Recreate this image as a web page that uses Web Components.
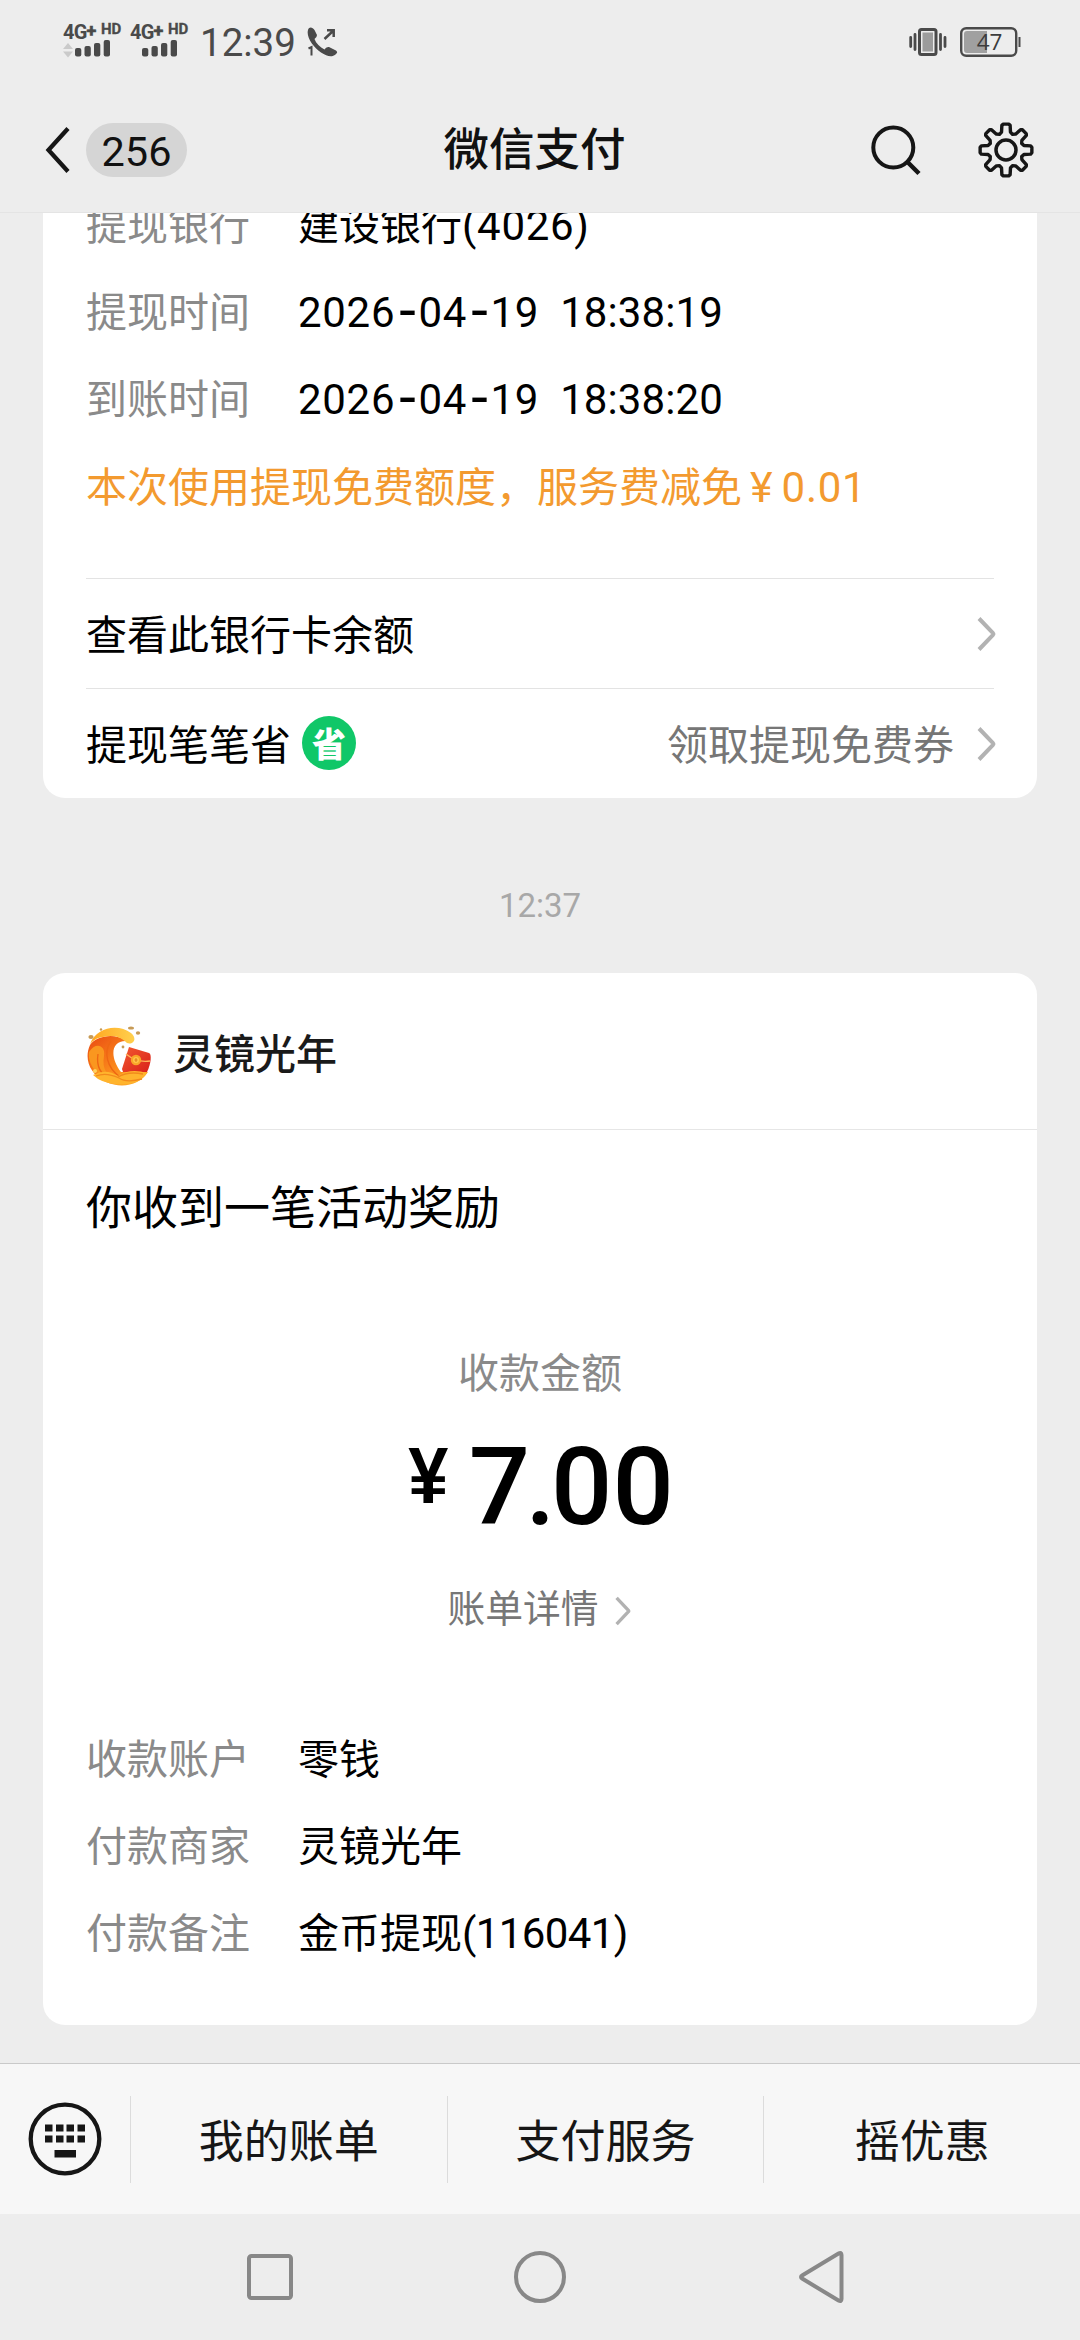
<!DOCTYPE html>
<html lang="zh-CN">
<head>
<meta charset="utf-8">
<title>微信支付</title>
<style>
html,body{margin:0;padding:0}
body{width:1080px;height:2340px;overflow:hidden;background:#ededed;color:#000;font-family:Roboto,"Noto Sans CJK SC",sans-serif}
</style>
</head>
<body>
<pay-app></pay-app>
<script>
const define = (name, html) => customElements.define(name, class extends HTMLElement {
  constructor() {
    super();
    const t = document.createElement('template');
    t.innerHTML = html;
    this.attachShadow({ mode: 'open' }).appendChild(t.content.cloneNode(true));
  }
});

define('arrow-icon', `
<style>:host{display:block;width:20px;height:38px}svg{display:block;width:100%;height:100%}</style>
<svg viewBox="0 0 20 38"><path d="M3 3.500L17 18.200Q17.700 19 17 19.800L3 34.500" fill="none" stroke="#b2b2b2" stroke-width="4"/></svg>`);

define('signal-mark', `
<style>
:host{display:flex;flex-direction:column;width:59px;height:36px;color:#4a4a4a}
.t{display:flex;height:16px;font-weight:700;line-height:17px;align-items:flex-start;white-space:nowrap}
.g{font-size:20px;width:38px;letter-spacing:-.8px}
.g span{font-size:18px;line-height:0;vertical-align:2.500px;-webkit-text-stroke:.6px #4a4a4a}
.h{font-size:15px;line-height:11px;letter-spacing:-.2px;-webkit-text-stroke:.3px #4a4a4a}
svg{display:block;width:50px;height:19px}
:host(:not([data])) .d{display:none}
</style>
<div class="t"><span class="g">4G<span>+</span></span><span class="h">HD</span></div>
<svg viewBox="0 0 50 19"><g class="d" fill="#cacaca"><path d="M0 9L5 3L10 9zM0 11.500L5 17.500L10 11.500z"/></g>
<g fill="#4a4a4a"><rect x="12" y="8" width="6.300" height="8.500" rx="2"/><rect x="21.500" y="6" width="6.300" height="10.500" rx="2"/><rect x="31" y="3" width="6.300" height="13.500" rx="2"/><rect x="40.700" y="0" width="6.300" height="16.500" rx="2"/></g></svg>`);

define('status-bar', `
<style>
:host{display:flex;height:84px;box-sizing:border-box;padding:0 59px 0 63px;align-items:center;color:#4a4a4a}
signal-mark{margin-right:8px}
.time{font-size:38.500px;line-height:40px;margin:1px 0 0 3px;width:107px;white-space:nowrap}
svg{display:block;flex:none}
.sp{flex:1}
.vib{margin-right:13px}
</style>
<signal-mark data></signal-mark><signal-mark></signal-mark>
<span class="time">12:39</span>
<svg width="32" height="32" viewBox="0 0 32 32"><path d="M1 4C1.500 .5 5.500 .5 7.500 4L10 9Q10 11.500 7.500 13C9 17.500 13 21 17.500 23.500Q19 20.500 22 21L29 24.500Q31.500 26.500 28.500 28.500C25 31.500 20 30.500 14 26.500C6 21-1 11 1 4Z" fill="#4a4a4a"/><path d="M17.500 13L26 5M20 4.300H26.700V11" fill="none" stroke="#4a4a4a" stroke-width="2.500"/><path d="M1.500 22.500L4.500 21V29.500" fill="none" stroke="#4a4a4a" stroke-width="2"/></svg>
<span class="sp"></span>
<svg class="vib" width="38" height="30" viewBox="0 0 38 30"><rect x="10.500" y="2.500" width="16.500" height="25" rx="2" fill="#ededed" stroke="#4a4a4a" stroke-width="3"/><rect x="13.500" y="5.500" width="10.500" height="19" fill="#9c9c9c"/><path d="M1.700 10.500V19.500M6 7.500V22.500M31.500 7.500V22.500M36 10.500V19.500" stroke="#4a4a4a" stroke-width="2.800" stroke-linecap="round"/></svg>
<svg width="61" height="30" viewBox="0 0 61 30"><rect x="1.200" y="1.200" width="55" height="27.600" rx="5" fill="none" stroke="#4a4a4a" stroke-width="2.400"/><path d="M4 7Q4 4 7 4H27V26H7Q4 26 4 23Z" fill="#a0a0a0"/><path d="M59.500 10V20" stroke="#4a4a4a" stroke-width="2"/><text x="29.500" y="23" text-anchor="middle" font-family="Open Sans" font-size="22.500" fill="#3c3c3c">47</text></svg>`);

define('nav-header', `
<style>
:host{display:grid;grid-template-columns:1fr auto 1fr;align-items:center;height:129px;box-sizing:border-box;padding:3px 45px 0 44px;border-bottom:1px solid #e4e4e4;color:#111}
div{display:flex;align-items:center;height:60px}
.b{font-size:41.500px;font-weight:450;background:#d5d5d5;border-radius:27px;width:101px;height:54px;line-height:57px;text-align:center;margin-left:15px}
h1{margin:0;font-size:45.500px;font-weight:500;line-height:60px;padding:3px 10px 0 0}
.r{justify-content:flex-end;gap:56px}
svg{display:block}
</style>
<div><svg width="27" height="50" viewBox="0 0 27 50"><path d="M24 3.500L4.500 25L24 46.500" fill="none" stroke="#161616" stroke-width="4.300"/></svg><span class="b">256</span></div>
<h1><slot></slot></h1>
<div class="r">
<svg width="52" height="56" viewBox="0 0 52 56"><circle cx="24.300" cy="25.500" r="20" fill="none" stroke="#161616" stroke-width="4"/><path d="M38.500 40L50 51.500" stroke="#161616" stroke-width="4.500"/></svg>
<svg id="gear" width="58" height="58" viewBox="-29 -29 58 58"><circle r="10" fill="none" stroke="#161616" stroke-width="3.500"/></svg>
</div>`);

define('info-row', `
<style>
:host{display:flex;align-items:center;height:87px;font-size:41px;line-height:60px;white-space:nowrap}
.l{color:#8a8a8a;width:212px;flex:none}
</style>
<span class="l"><slot name="label"></slot></span><span><slot></slot></span>`);

define('entry-row', `
<style>
:host{display:flex;align-items:center;height:110px;box-sizing:border-box;border-top:1px solid #e3e3e3;font-size:41px;line-height:60px;padding:4px 0 0}
.x{margin-left:auto;color:#767676;margin-right:22px}
arrow-icon{margin-top:-4px;margin-right:-2px}
</style>
<slot></slot><span class="x"><slot name="extra"></slot></span><arrow-icon></arrow-icon>`);

define('save-badge', `
<style>:host{display:flex;align-items:center;justify-content:center;width:54px;height:54px;border-radius:50%;background:#10c768;color:#fff;margin:-5px 0 0 11px;font:900 34px/54px "Noto Sans CJK SC",sans-serif}</style><slot></slot>`);

define('time-stamp', `
<style>:host{display:block;flex:none;height:175px;box-sizing:border-box;padding-top:79px;text-align:center;color:#a8a8a8;font-size:33px;line-height:57px}</style><slot></slot>`);

define('pay-card', `
<style>:host{display:block;box-sizing:border-box;margin:0 43px;padding:0 43px;background:#fff;border-radius:22px;flex:none}</style><slot></slot>`);

define('wave-logo', `
<style>:host{display:block;width:66px;height:62px}svg{display:block}</style>
<svg width="66" height="62" viewBox="0 0 66 62">
<defs><linearGradient id="a" x1="0" y1="0" x2="1" y2="1"><stop offset="0" stop-color="#e94a12"/><stop offset=".55" stop-color="#fb8a1c"/><stop offset="1" stop-color="#ffb62d"/></linearGradient>
<linearGradient id="b" x1="0" y1="0" x2="1" y2="1"><stop offset="0" stop-color="#f25a30"/><stop offset="1" stop-color="#d9201a"/></linearGradient>
<linearGradient id="c" x1="0" y1="0" x2="1" y2="0"><stop offset="0" stop-color="#ffa51f"/><stop offset="1" stop-color="#ffd04d"/></linearGradient></defs>
<path d="M41 16C24 15 24 33 35 47L62 47C54 60 36 64 20 57C3 49-2 33 4 20C10 11 28 7 41 16Z" fill="url(#a)"/>
<path d="M4 19C11 1 33-1 45 8C52 14 47 20 41 18C33 10 25 10 17 12C10 13 7 16 4 19Z" fill="url(#c)"/>
<path d="M3 27C10 16 20 21 18 31C16 44 20 50 32 55C17 56 1 43 3 27Z" fill="#fa971f"/>
<path d="M12 29C10 42 15 50 25 54M25 16C17 27 21 43 34 52" fill="none" stroke="#ee6613" stroke-width="1.300"/>
<path d="M43 22L63 28C66 29 65 39 61 47L37 47L36 44Z" fill="url(#b)"/>
<path d="M40 29Q51 38 64 36" fill="none" stroke="#ffb35a" stroke-width="1.400"/>
<circle cx="50" cy="35" r="5.200" fill="#f9a629"/><circle cx="50" cy="35" r="3" fill="#ffc649"/><path d="M50 33V37M48.500 35H51.500" stroke="#dd7a18"/>
<path d="M7 50Q20 43 32 51Q44 43 61 48C54 59 40 60 31 59.500Q15 58 7 50Z" fill="#ffb42d"/>
<path d="M10 51Q20 47 33 53Q40 58 56 54M32 52Q42 46 57 49" fill="none" stroke="#f28a1c" stroke-width="1.300"/>
<g fill="#c79a55"><ellipse cx="5" cy="12" rx="2.600" ry="2"/><circle cx="15" cy="4.500" r="1.200"/><ellipse cx="45" cy="3" rx="3" ry="1.600"/><ellipse cx="52" cy="8" rx="2.200" ry="1.700"/><circle cx="37" cy="22" r="1.400"/></g>
<circle cx="9" cy="46" r="2" fill="#ffd25c"/>
</svg>`);

define('merchant-head', `
<style>:host{display:flex;align-items:center;height:157px;box-sizing:border-box;border-bottom:1px solid #e6e6e6;margin:0 -43px;padding:0 43px;font-size:41px;font-weight:500;color:#1a1a1a}
wave-logo{margin:9px 21px 0 0}</style><wave-logo></wave-logo><slot></slot>`);

define('amount-block', `
<style>
:host{display:flex;flex-direction:column;align-items:center}
.c{color:#8a8a8a;font-size:41px;line-height:60px;margin-top:60px}
.m{display:flex;height:166px;align-items:center;font-weight:500;font-size:108px;line-height:130px}
.y{font-size:80px;line-height:80px;margin:-22px 18px 0 0;font-family:"Liberation Sans";font-weight:700;transform:scaleX(.9)}
.d{display:flex;align-items:center;height:81px;font-size:37.800px;line-height:60px;color:#777}
.d span{margin:-3px 0 0 -2px}
arrow-icon{width:17px;height:32px;margin-left:15px}
</style>
<span class="c"><slot name="caption"></slot></span>
<span class="m"><span class="y">¥</span><span><slot></slot></span></span>
<span class="d"><span><slot name="link"></slot></span><arrow-icon></arrow-icon></span>`);

define('menu-bar', `
<style>
:host{display:flex;height:151px;flex:none;box-sizing:border-box;border-top:1px solid #c9c9c9;background:#f7f7f7;align-items:center;color:#161616;font-size:45px}
.k{width:130px;display:flex;justify-content:center}
.k svg{display:block}
::slotted(span){flex:1;border-left:1px solid #dcdcdc;height:87px;line-height:93px;text-align:center}
</style>
<div class="k"><svg width="76" height="76" viewBox="0 0 76 76"><circle cx="38" cy="38" r="34.300" fill="none" stroke="#161616" stroke-width="4.300"/><path d="M18 23.500h7.500v7h-7.500zM29 23.500h7.500v7h-7.500zM39.500 23.500h7.500v7h-7.500zM50.500 23.500h7.500v7h-7.500zM18 34.500h7.500v7h-7.500zM29 34.500h7.500v7h-7.500zM39.500 34.500h7.500v7h-7.500zM50.500 34.500h7.500v7h-7.500zM27.500 49h21.500v7.500h-21.500z" fill="#161616"/></svg></div>
<slot></slot>`);

define('system-nav', `
<style>:host{display:grid;grid-template-columns:repeat(3,270px);justify-content:center;justify-items:center;align-items:center;height:126px;flex:none}svg{display:block}</style>
<svg width="60" height="60" viewBox="0 0 60 60"><rect x="9" y="9" width="42" height="42" rx="2.500" fill="none" stroke="#888" stroke-width="4"/></svg>
<svg width="60" height="60" viewBox="0 0 60 60"><circle cx="30" cy="30" r="24" fill="none" stroke="#888" stroke-width="4"/></svg>
<svg width="60" height="60" viewBox="-10 0 60 60"><path d="M51.500 8V52Q51.500 55 48.500 53.500L12.500 31.800Q9.500 30 12.500 28.200L48.500 6.500Q51.500 5 51.500 8Z" fill="none" stroke="#888" stroke-width="4"/></svg>`.replace('<style>', '<style>svg{overflow:visible}'));

define('pay-app', `
<style>
:host{display:flex;flex-direction:column;width:1080px;height:2340px;background:#ededed}
main{flex:1;min-height:0;overflow:hidden;display:flex;flex-direction:column;justify-content:flex-end;padding-bottom:38px}
.n{font-size:42px;letter-spacing:.7px}
.w{letter-spacing:-.6px}
.s{margin-left:10px;letter-spacing:.1px}
.h{font-size:60px;line-height:0;vertical-align:-4.500px;padding:0 2px 0 4px}
.tip{color:#f39a2f;font-size:41px;line-height:88px;padding-bottom:46px;white-space:nowrap}
.y{margin:0 9px 0 8px;font-size:43px}
.t{height:154px;line-height:156px;font-size:46px}
.rows{margin-top:65px;padding-bottom:48px}
.p{margin:0 -4.500px}
</style>
<status-bar></status-bar>
<nav-header>微信支付</nav-header>
<main>
<pay-card>
<info-row><span slot="label">提现银行</span>建设银行<span class="n">(4026)</span></info-row>
<info-row><span slot="label">提现时间</span><span class="n">2026<span class="h">-</span>04<span class="h">-</span>19 <span class="s">18:38:19</span></span></info-row>
<info-row><span slot="label">到账时间</span><span class="n">2026<span class="h">-</span>04<span class="h">-</span>19 <span class="s">18:38:20</span></span></info-row>
<div class="tip">本次使用提现免费额度，服务费减免<span class="y">¥</span><span class="n">0.01</span></div>
<entry-row>查看此银行卡余额</entry-row>
<entry-row>提现笔笔省<save-badge>省</save-badge><span slot="extra">领取提现免费券</span></entry-row>
</pay-card>
<time-stamp>12:37</time-stamp>
<pay-card>
<merchant-head>灵镜光年</merchant-head>
<div class="t">你收到一笔活动奖励</div>
<amount-block><span slot="caption">收款金额</span>7<span class="p">.</span>00<span slot="link">账单详情</span></amount-block>
<div class="rows">
<info-row><span slot="label">收款账户</span>零钱</info-row>
<info-row><span slot="label">付款商家</span>灵镜光年</info-row>
<info-row><span slot="label">付款备注</span>金币提现<span class="n w">(116041)</span></info-row>
</div>
</pay-card>
</main>
<menu-bar><span>我的账单</span><span>支付服务</span><span>摇优惠</span></menu-bar>
<system-nav></system-nav>`);

// Eight-toothed outline for the settings gear
const gear = document.querySelector('pay-app').shadowRoot.querySelector('nav-header').shadowRoot.getElementById('gear');
let d = '';
for (let i = 0; i < 8; i++) {
  for (const [a, r] of [[-14, 18.5], [-9.500, 25], [-6, 26], [6, 26], [9.500, 25], [14, 18.5], [22.500, 17]]) {
    const q = (a + i * 45) * Math.PI / 180;
    d += (d ? 'L' : 'M') + (r * Math.sin(q)).toFixed(2) + ' ' + (-r * Math.cos(q)).toFixed(2);
  }
}
const p = document.createElementNS('http://www.w3.org/2000/svg', 'path');
p.setAttribute('d', d + 'Z');
p.setAttribute('fill', 'none');
p.setAttribute('stroke', '#161616');
p.setAttribute('stroke-width', '3.4');
p.setAttribute('stroke-linejoin', 'round');
gear.appendChild(p);
</script>
</body>
</html>
